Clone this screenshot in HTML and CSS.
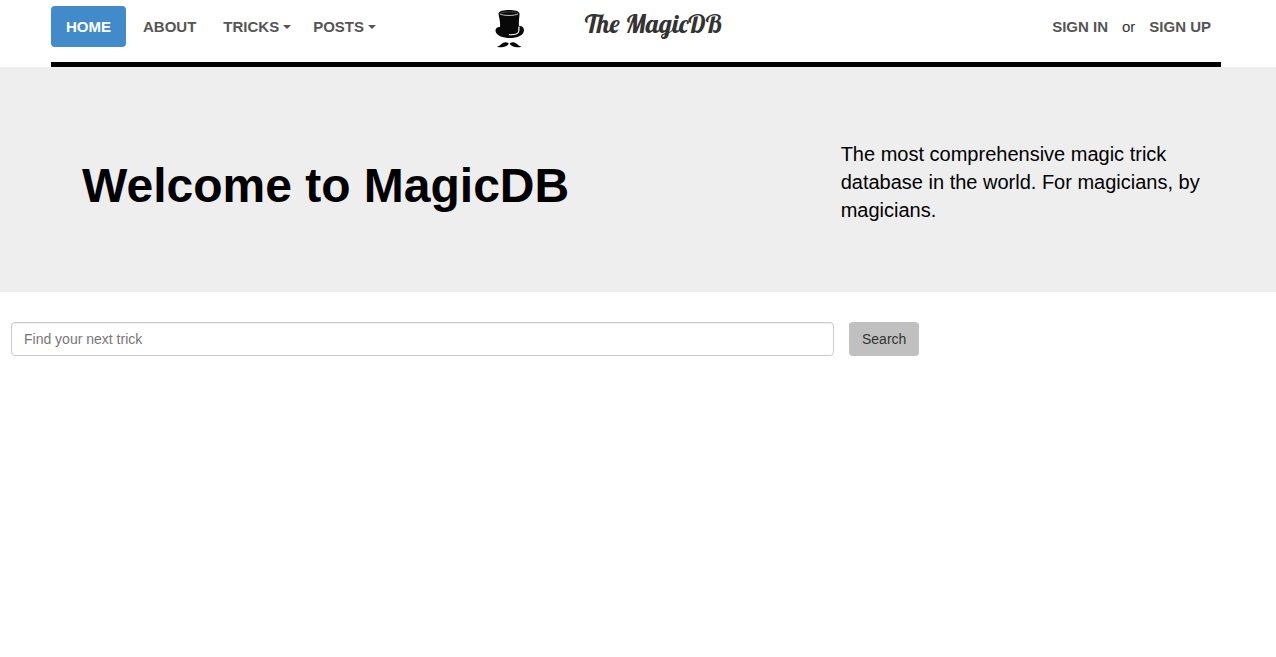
FILE: index.html
```html
<!DOCTYPE html>
<html lang="en">
<head>
<meta charset="utf-8">
<meta name="viewport" content="width=device-width, initial-scale=1">
<title>The MagicDB</title>
<link rel="stylesheet" href="styles.css">
</head>
<body>
<header class="header">
  <nav class="menu" aria-label="Main">
    <a class="menu-link active" href="#">HOME</a>
    <a class="menu-link" href="#">ABOUT</a>
    <a class="menu-link dropdown" href="#">TRICKS<span class="caret"></span></a>
    <a class="menu-link dropdown" href="#">POSTS<span class="caret"></span></a>
  </nav>
  <a class="brand" href="#">
    <svg class="logo" viewBox="0 0 30 40" aria-hidden="true">
      <path d="M3.500 4.500C3.500 2 9 1 14 1S24.500 2 24.500 4.500C24.500 8 23.500 12 24 17C27 16.500 29 18.500 29 21C29 26.500 22 29 15 29S.5 26.500.5 21.500C.5 19 3 17.500 5 18C5.500 12 4 9 3.500 4.500Z" fill="#080808"/>
      <path d="M4.800 4.800C8 7 20 7 23.200 4.800" fill="none" stroke="#ddd" stroke-width=".9"/>
      <path d="M6 3.800C9 2.600 19 2.600 22 3.800" fill="none" stroke="#777" stroke-width=".5"/>
      <path d="M14 25.700C20 26 23.500 24.500 23.800 22L24 17.500" fill="none" stroke="#fff" stroke-width="1.200"/>
      <path d="M2 37.700C5.500 36.500 7 33.800 10 33.200C12 32.900 13.700 33.700 13.700 34.900C12.500 37 7 39.300 2 37.700ZM26.500 37.700C23 36.500 21.500 33.800 18.500 33.200C16.500 32.900 14.800 33.700 14.800 34.900C16 37 21.500 39.300 26.500 37.700Z" fill="#080808"/>
    </svg>
    <span class="brand-name">The MagicDB</span>
  </a>
  <div class="account">
    <a class="account-link" href="#">SIGN IN</a>
    <span>or</span>
    <a class="account-link" href="#">SIGN UP</a>
  </div>
</header>
<main>
  <section class="hero">
    <h1 class="hero-title">Welcome to MagicDB</h1>
    <p class="hero-text">The most comprehensive magic trick database in the world. For magicians, by magicians.</p>
  </section>
  <form class="search">
    <input class="search-input" type="text" placeholder="Find your next trick" aria-label="Find your next trick">
    <button class="search-button" type="button">Search</button>
  </form>
</main>
</body>
</html>
```

FILE: styles.css
```css
* {
  box-sizing: border-box;
}

body {
  margin: 0;
  background: #fff;
  color: #333;
  font-family: "Liberation Sans", Arial, sans-serif;
  font-size: 14px;
  line-height: 20px;
}

a {
  color: inherit;
  text-decoration: none;
}

.header {
  display: grid;
  grid-template-columns: 38% 1fr auto;
  align-items: start;
  margin: 0 55px 0 51px;
  padding: 6px 10px 13px 0;
  border-bottom: 5px solid #000;
  font-size: 15px;
  line-height: 21px;
}

.menu {
  display: flex;
  gap: 2px;
}

.menu-link {
  padding: 10px 15px;
  border-radius: 4px;
  color: #555;
  font-weight: bold;
}

.menu-link.active {
  background: #428bca;
  color: #fff;
}

.menu-link.dropdown {
  display: flex;
  align-items: center;
  gap: 4px;
  padding: 10px;
}

.caret {
  border-top: 4px solid;
  border-right: 4px solid transparent;
  border-left: 4px solid transparent;
}

.brand {
  display: flex;
  gap: 60px;
  padding: 3px 0 0 3px;
}

.logo {
  width: 30px;
  height: 40px;
}

.brand-name {
  font-family: Lobster, "Liberation Serif", serif;
  font-size: 26px;
  line-height: 30px;
}

.account {
  display: flex;
  gap: 14px;
  padding: 10px 0;
}

.account-link {
  color: #555;
  font-weight: bold;
}

.hero {
  display: grid;
  grid-template-columns: 2fr 1fr;
  align-items: center;
  gap: 16px;
  padding: 70px 64px 68px 82px;
  background: #eee;
  color: #000;
}

.hero-title {
  margin: 0;
  padding-top: 10px;
  font-size: 48px;
  line-height: 52px;
}

.hero-text {
  margin: 3px 0 0;
  font-size: 20px;
  line-height: 28px;
}

.search {
  display: flex;
  gap: 15px;
  padding: 30px 11px;
}

.search-input {
  width: 823px;
  min-width: 0;
  height: 34px;
  padding: 6px 12px;
  border: 1px solid #ccc;
  border-radius: 4px;
  background: #fff;
  box-shadow: inset 0 1px 1px rgba(0, 0, 0, .075);
  color: #555;
  font: inherit;
}

.search-input::placeholder {
  color: #777;
}

.search-button {
  padding: 6px 13px;
  border: 0;
  border-radius: 4px;
  background: #c0c0c0;
  color: #333;
  font: inherit;
}
```
